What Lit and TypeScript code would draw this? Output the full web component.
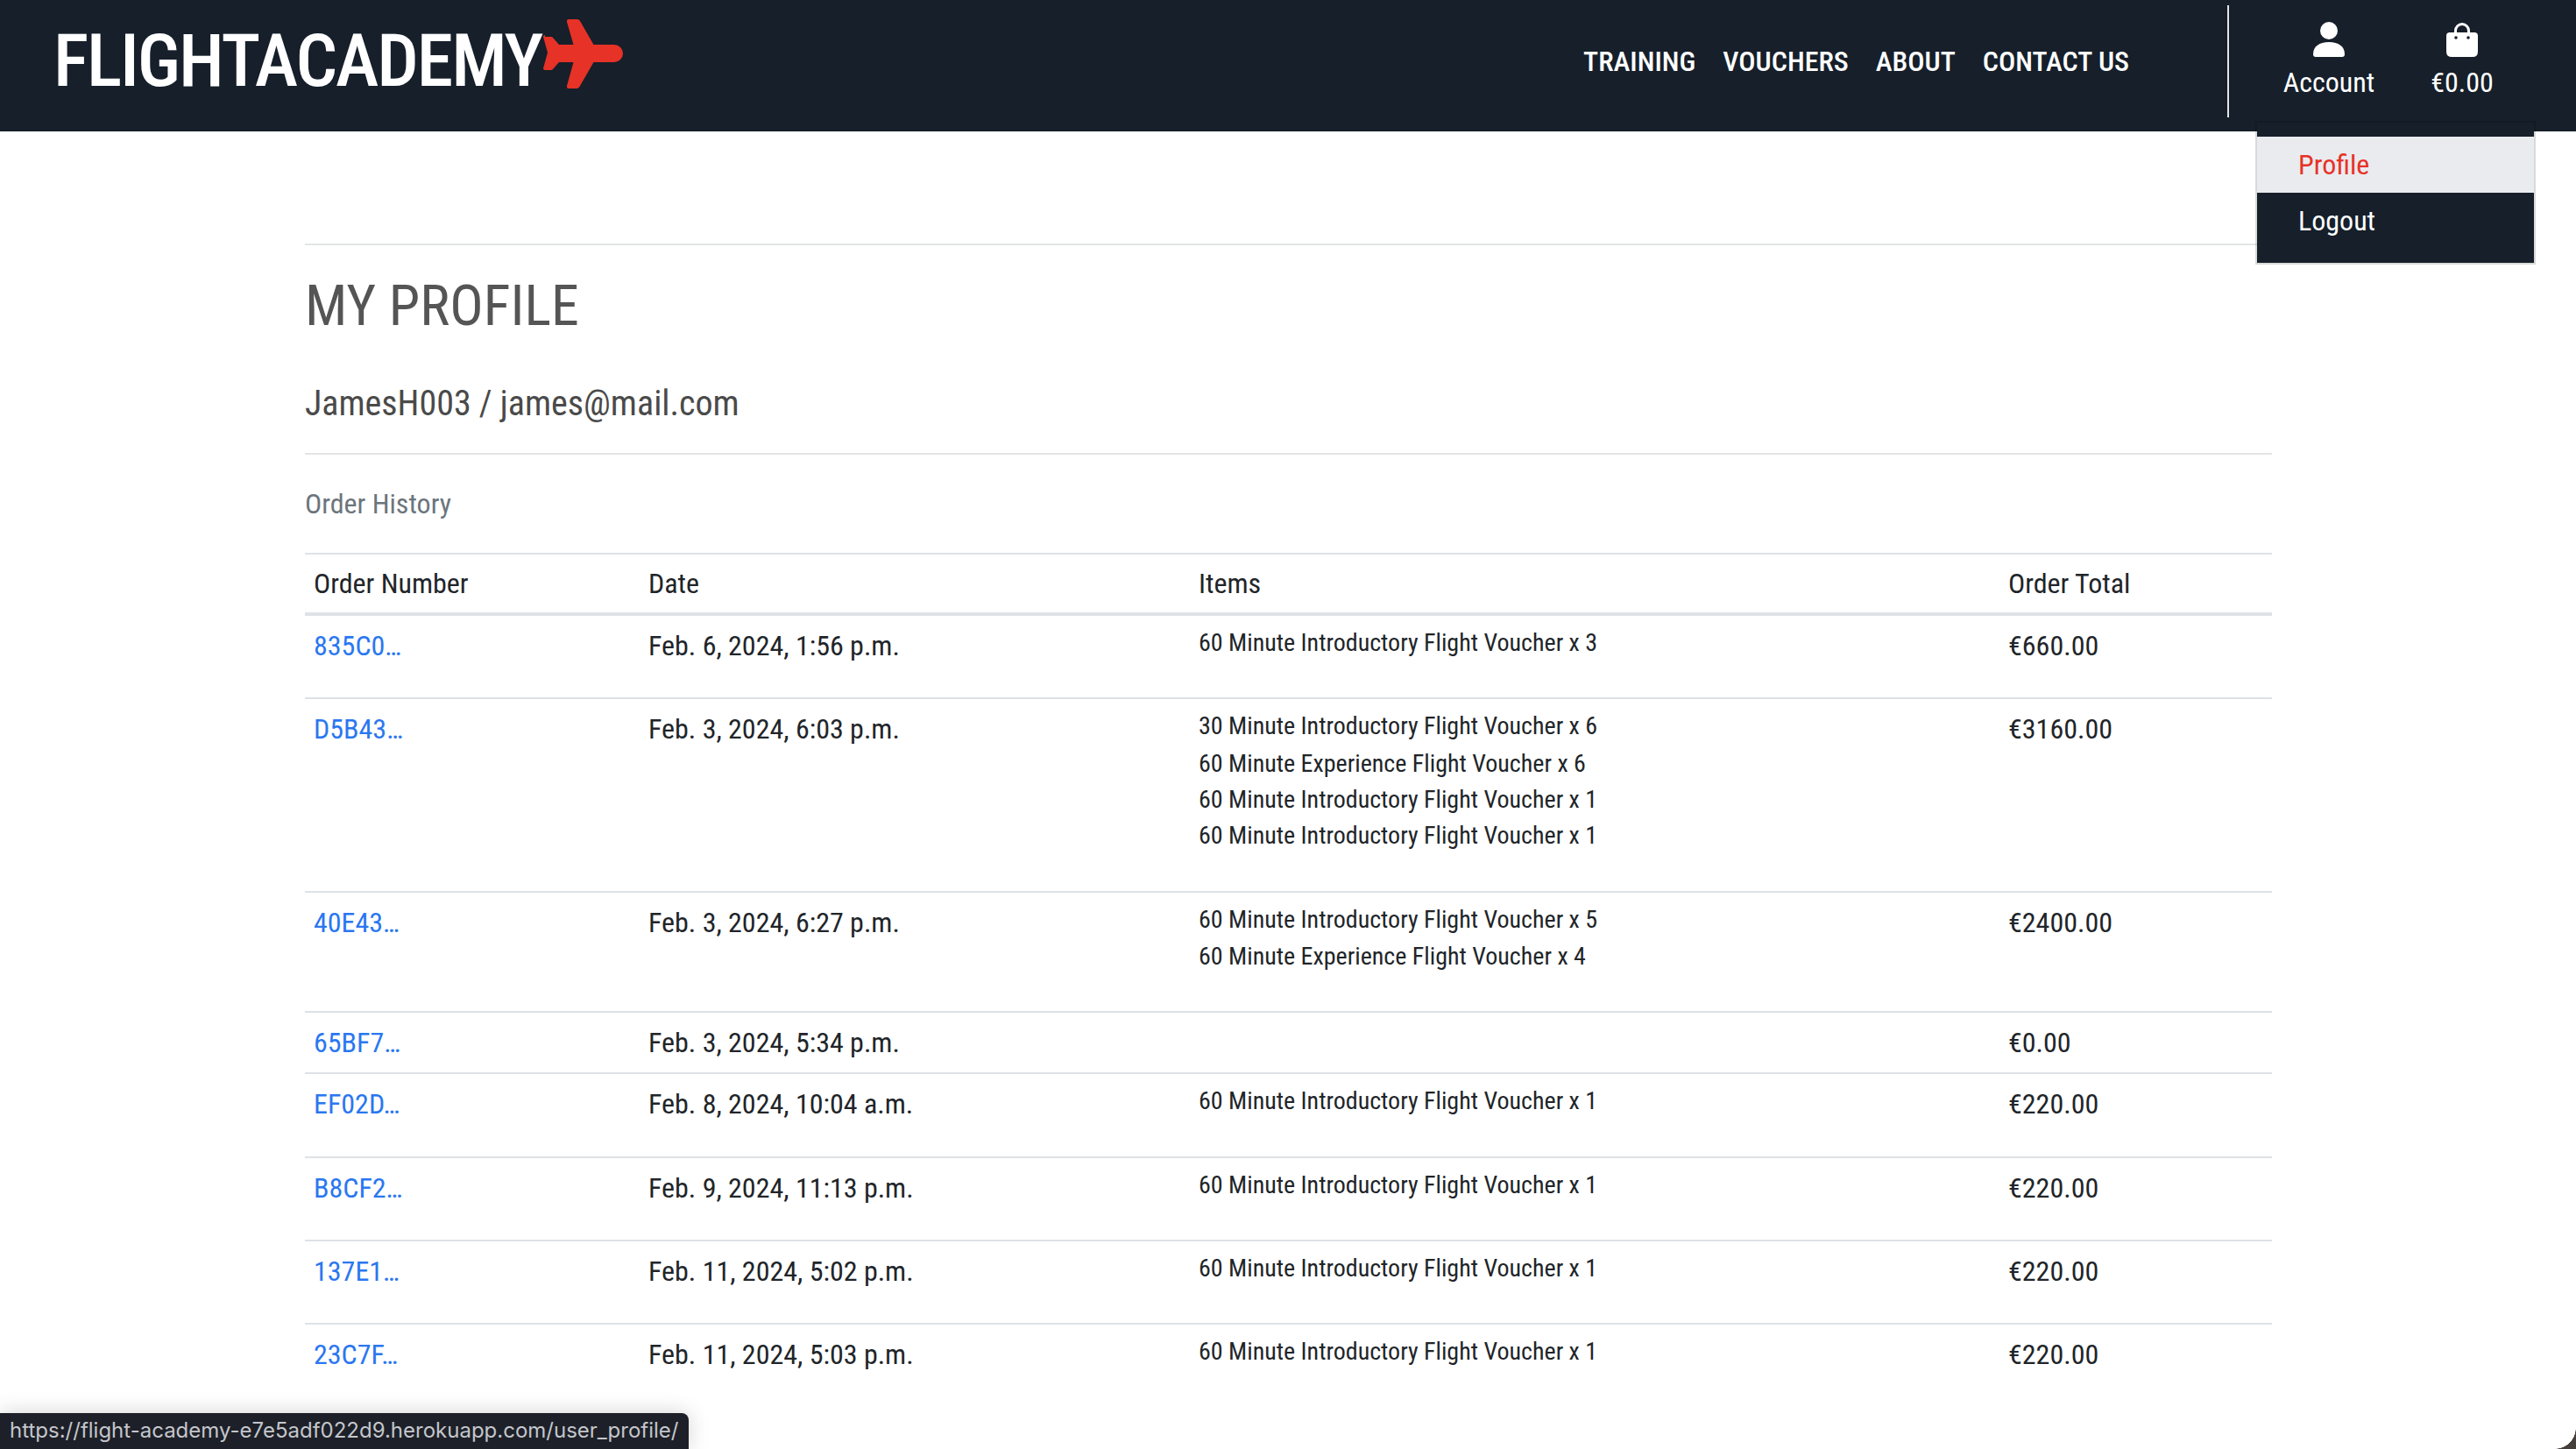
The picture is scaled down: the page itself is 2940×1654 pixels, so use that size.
import { LitElement, css, html } from 'lit';
import { customElement } from 'lit/decorators.js';

interface Order {
  id: string;
  date: string;
  items: string[];
  total: string;
}

const ORDERS: Order[] = [
  { id: '835C0…', date: 'Feb. 6, 2024, 1:56 p.m.', items: ['60 Minute Introductory Flight Voucher x 3'], total: '€660.00' },
  {
    id: 'D5B43…',
    date: 'Feb. 3, 2024, 6:03 p.m.',
    items: [
      '30 Minute Introductory Flight Voucher x 6',
      '60 Minute Experience Flight Voucher x 6',
      '60 Minute Introductory Flight Voucher x 1',
      '60 Minute Introductory Flight Voucher x 1',
    ],
    total: '€3160.00',
  },
  {
    id: '40E43…',
    date: 'Feb. 3, 2024, 6:27 p.m.',
    items: ['60 Minute Introductory Flight Voucher x 5', '60 Minute Experience Flight Voucher x 4'],
    total: '€2400.00',
  },
  { id: '65BF7…', date: 'Feb. 3, 2024, 5:34 p.m.', items: [], total: '€0.00' },
  { id: 'EF02D…', date: 'Feb. 8, 2024, 10:04 a.m.', items: ['60 Minute Introductory Flight Voucher x 1'], total: '€220.00' },
  { id: 'B8CF2…', date: 'Feb. 9, 2024, 11:13 p.m.', items: ['60 Minute Introductory Flight Voucher x 1'], total: '€220.00' },
  { id: '137E1…', date: 'Feb. 11, 2024, 5:02 p.m.', items: ['60 Minute Introductory Flight Voucher x 1'], total: '€220.00' },
  { id: '23C7F…', date: 'Feb. 11, 2024, 5:03 p.m.', items: ['60 Minute Introductory Flight Voucher x 1'], total: '€220.00' },
];

const NAV = ['TRAINING', 'VOUCHERS', 'ABOUT', 'CONTACT US'];

@customElement('app-root')
export class AppRoot extends LitElement {
  render() {
    return html`
      <header class="top">
        <div class="logo">
          <span class="logo-text">FLIGHTACADEMY</span>
          <svg class="plane" viewBox="620 20 92 84" width="92" height="84">
            <path
              fill="#e73227"
              d="M622 43h7q1.500 0 2 1l7 8h16.500l-7.500-26q-.5-3 2-3h10q2 0 3 2l15.500 27H701a10 10 0 0 1 0 20h-23.500L662 99q-1 2-3 3h-10q-2.500 0-2-3l7.500-27H638l-7 8q-.5 1-2 1h-7q-2 0-2-2l5-18-5-18q0-2 2-2z"
            />
          </svg>
        </div>
        <nav class="nav">${NAV.map((n) => html`<a>${n}</a>`)}</nav>
        <div class="divider"></div>
        <div class="tool account">
          <svg viewBox="0 0 36 40" width="36" height="40">
            <circle cx="18" cy="10" r="10" fill="#fff" />
            <path fill="#fff" d="M0 37c0-9 7-14 18-14s18 5 18 14q0 3-3 3H3q-3 0-3-3z" />
          </svg>
          <span>Account</span>
        </div>
        <div class="tool cart">
          <svg viewBox="0 0 36 40" width="36" height="40">
            <path fill="none" stroke="#fff" stroke-width="3" d="M10.500 17v-7a7.500 7.500 0 0 1 15 0v7" />
            <path fill="#fff" d="M4 12h28q4 0 4 4v18q0 6-6 6H6q-6 0-6-6V16q0-4 4-4z" />
            <circle cx="11" cy="18" r="1.800" fill="#161f2a" />
            <circle cx="25" cy="18" r="1.800" fill="#161f2a" />
          </svg>
          <span>€0.00</span>
        </div>
      </header>

      <div class="menu">
        <a class="active">Profile</a>
        <a>Logout</a>
      </div>

      <main class="content">
        <hr />
        <h1>MY PROFILE</h1>
        <p class="user">JamesH003 / james@mail.com</p>
        <hr />
        <p class="muted">Order History</p>
        <table>
          <colgroup>
            <col style="width: 382px" />
            <col style="width: 628px" />
            <col style="width: 924px" />
            <col />
          </colgroup>
          <thead>
            <tr>
              <th>Order Number</th>
              <th>Date</th>
              <th>Items</th>
              <th>Order Total</th>
            </tr>
          </thead>
          <tbody>
            ${ORDERS.map(
              (o) => html`
                <tr>
                  <td><a class="link">${o.id}</a></td>
                  <td>${o.date}</td>
                  <td class="items">
                    ${o.items.length ? html`<ul>${o.items.map((i) => html`<li>${i}</li>`)}</ul>` : ''}
                  </td>
                  <td>${o.total}</td>
                </tr>
              `
            )}
          </tbody>
        </table>
      </main>

      <div class="status">https://flight-academy-e7e5adf022d9.herokuapp.com/user_profile/</div>
      <div class="corner"></div>
    `;
  }

  static styles = css`
    :host {
      display: block;
      position: relative;
      height: 1654px;
      overflow: hidden;
      background: #fff;
      color: #212529;
      font-family: 'Roboto Condensed', 'Liberation Sans Narrow', Roboto, sans-serif;
      font-stretch: condensed;
      font-size: 32px;
      line-height: 48px;
    }

    .top {
      display: flex;
      align-items: center;
      height: 150px;
      background: #161f2a;
      color: #fff;
      padding-left: 61px;
      box-sizing: border-box;
    }
    .logo {
      display: flex;
      align-items: center;
      height: 150px;
    }
    .logo-text {
      font-size: 84px;
      font-weight: 500;
      line-height: 84px;
      letter-spacing: -2.150px;
      margin-top: -10px;
      width: 559px;
      white-space: nowrap;
    }
    .plane {
      margin-top: -28px;
    }
    .nav {
      display: flex;
      gap: 31px;
      margin-left: auto;
      margin-top: -10px;
      font-weight: 500;
    }
    .divider {
      width: 2px;
      height: 128px;
      margin: -10px 0 0 112px;
      background: #e3e4e6;
    }
    .tool {
      display: flex;
      flex-direction: column;
      align-items: center;
      margin-top: -7px;
    }
    .tool svg {
      display: block;
      margin-bottom: 5px;
    }
    .account {
      width: 110px;
      margin-left: 59px;
    }
    .cart {
      width: 110px;
      margin: -7px 75px 0 42px;
    }

    .menu {
      position: absolute;
      left: 2574px;
      top: 138px;
      width: 320px;
      height: 164px;
      box-sizing: border-box;
      padding-top: 16px;
      background: #161f2a padding-box;
      border: 2px solid rgba(0, 0, 0, 0.15);
      color: #fff;
    }
    .menu a {
      display: block;
      height: 64px;
      line-height: 64px;
      padding-left: 47px;
    }
    .menu .active {
      background: #e9ebef;
      color: #e73227;
    }

    .content {
      width: 2245px;
      margin-left: 348px;
      padding-top: 128px;
    }
    hr {
      height: 2px;
      margin: 0;
      border: 0;
      background: #e3e4e6;
    }
    h1 {
      margin: 0;
      padding-top: 32px;
      height: 91px;
      font-size: 64px;
      line-height: 76px;
      font-weight: 400;
      color: #555;
    }
    .user {
      margin: 0;
      padding: 28px 0 0;
      height: 86px;
      font-size: 40px;
      line-height: 60px;
      color: #4a4a4a;
    }
    .muted {
      margin: 0;
      padding-top: 32px;
      height: 80px;
      color: #6c757d;
    }

    table {
      width: 100%;
      table-layout: fixed;
      border-collapse: collapse;
      border-top: 2px solid #dee2e6;
    }
    th {
      text-align: left;
      font-weight: 450;
      padding: 9px 10px;
      border-bottom: 4px solid #dee2e6;
    }
    td {
      padding: 10px;
      vertical-align: top;
    }
    tbody tr + tr td {
      border-top: 2px solid #dee2e6;
    }
    .link {
      color: #2a77f0;
    }
    .items ul {
      list-style: none;
      margin: 0 0 32px;
      padding: 0;
      font-size: 28px;
      line-height: 41.300px;
    }
    .items li:first-child:not(:only-child) {
      margin-bottom: 1.100px;
    }

    .status {
      position: absolute;
      left: 0;
      bottom: 0;
      width: 786px;
      height: 41px;
      box-sizing: border-box;
      padding-left: 11px;
      background: #1d2028;
      border-top-right-radius: 8px;
      box-shadow: 0 0 24px rgba(0, 0, 0, 0.18);
      color: #c4c6cc;
      font-family: Inter, sans-serif;
      font-stretch: normal;
      font-size: 24px;
      line-height: 40px;
      white-space: nowrap;
    }
    .corner {
      position: absolute;
      right: 0;
      bottom: 0;
      width: 24px;
      height: 24px;
      background: radial-gradient(circle at 0 0, transparent 23.500px, #453f3b 24px);
    }
  `;
}

declare global {
  interface HTMLElementTagNameMap {
    'app-root': AppRoot;
  }
}
